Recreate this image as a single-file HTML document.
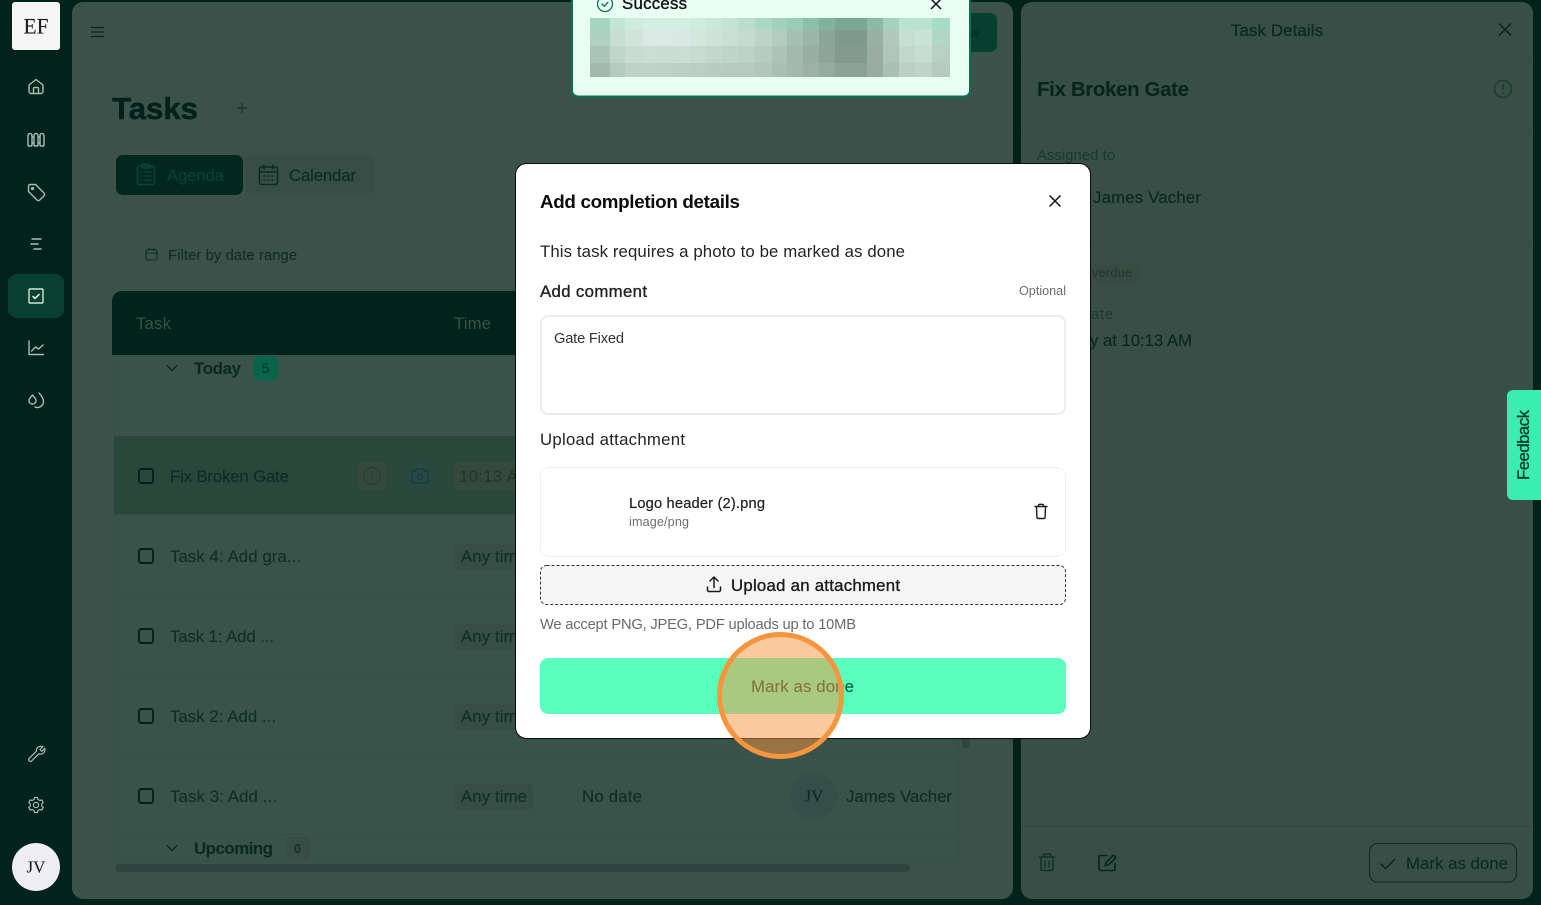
<!DOCTYPE html>
<html lang="en"><head><meta charset="utf-8"><title>Tasks</title>
<style>
html,body{margin:0;padding:0;width:1541px;height:905px;overflow:hidden;background:#02231a}
svg{display:block}
text{font-family:"Liberation Sans",Arial,sans-serif;font-size:16.8px;stroke:rgba(10,40,32,.45);stroke-width:.2}
.d{fill:#0a2a22}
.m{stroke-width:.35;stroke:currentColor}
.i{fill:none;stroke-linecap:round;stroke-linejoin:round}
</style></head><body>
<svg xmlns="http://www.w3.org/2000/svg" width="1541" height="905" viewBox="0 0 1541 905">
<rect width="1541" height="905" fill="#02231a"/>
<!-- main panel -->
<rect x="72" y="2" width="941" height="897" rx="11" fill="#3a5249"/>
<rect x="1021" y="2" width="512" height="897" rx="11" fill="#384f48"/>
<!-- sidebar -->
<rect x="12" y="2" width="48" height="48" rx="3" fill="#f5f5f6"/>
<text x="36" y="33.500" text-anchor="middle" style="font-family:'Liberation Serif',serif;font-size:22px" fill="#1c1c1c" textLength="25" lengthAdjust="spacingAndGlyphs">EF</text>
<rect x="8" y="274" width="56" height="44" rx="9" fill="#07402f"/>
<g class="i" stroke="#a9bdb7" stroke-width="1.4">
<path d="M29 91.500v-6.500l7-5.500 7 5.500v6.500a2 2 0 0 1-2 2H31a2 2 0 0 1-2-2z"/><path d="M33.500 93.500v-5a1 1 0 0 1 1-1h3a1 1 0 0 1 1 1v5"/>
<path d="M28 135.500v9.500a1 1 0 0 0 1 1h2a1 1 0 0 0 1-1v-9.500a2 2 0 0 0-4 0zM34 135.500v9.500a1 1 0 0 0 1 1h2a1 1 0 0 0 1-1v-9.500a2 2 0 0 0-4 0zM40 135.500v9.500a1 1 0 0 0 1 1h2a1 1 0 0 0 1-1v-9.500a2 2 0 0 0-4 0zM32 137h2M38 137h2M32 143h2M38 143h2"/>
<path d="M28.500 186a1.500 1.500 0 0 1 1.500-1.500h5.500l8.500 8.500a2 2 0 0 1 0 2.800l-4.200 4.200a2 2 0 0 1-2.800 0l-8.500-8.500z"/><circle cx="32.500" cy="188.500" r=".9"/>
<path d="M32 239h9M31 244h7M34 249h7"/>
<path d="M29 341v13.500h14.500M31.500 351l4-4 3 2 4.500-4"/>
<path d="M39 393c2 2.500 4.500 5 4.500 8.500a6 6 0 0 1-8.500 5.500"/><path d="M32.500 395l2.700 3.300a3.500 3.500 0 1 1-5.400 0z"/>
<path d="M43 746.500l-3 3 1.800 1.800 3-3a4.500 4.500 0 0 1-6 5.500l-7.300 7.300a1.800 1.800 0 0 1-2.500-2.500l7.300-7.300a4.500 4.500 0 0 1 5.700-4.800z" stroke-width="1.200"/>
<circle cx="36" cy="805" r="2.600" stroke-width="1.200"/><path d="M34.500 797.500h3l.5 2 1.800 1 2-.6 1.500 2.600-1.500 1.500v2l1.500 1.500-1.500 2.600-2-.6-1.800 1-.5 2h-3l-.5-2-1.800-1-2 .6-1.500-2.600 1.500-1.500v-2l-1.500-1.500 1.500-2.600 2 .6 1.800-1z" stroke-width="1.200"/>
</g>
<g class="i" stroke="#d4e6df" stroke-width="1.400"><rect x="29" y="289" width="14" height="14" rx="1"/><path d="M33 296.500l2 2 4-4" stroke-width="1.600"/></g>
<circle cx="36" cy="867" r="24" fill="#eeeef2"/>
<text x="36" y="872.500" text-anchor="middle" style="font-family:'Liberation Serif',serif;font-size:17px" fill="#1c1c1c">JV</text>
<!-- top -->
<path d="M91 27.500h13M91 32h13M91 36.500h13" stroke="#10261f" stroke-width="1.300" fill="none"/>
<rect x="960" y="13" width="37" height="39" rx="7" fill="#073f2e"/>
<text x="969" y="37" fill="#052a20" style="font-size:14px">w</text>
<text x="112" y="119" style="font-size:31px;font-weight:700;stroke:#04201a;stroke-width:.5" fill="#04201a" textLength="86" lengthAdjust="spacingAndGlyphs">Tasks</text>
<path d="M242 103v10M237 108h10" stroke="#142e27" stroke-width="1.200"/>
<!-- tabs -->
<rect x="245" y="153" width="129" height="42" rx="8" fill="#364e46"/>
<rect x="116" y="155" width="127" height="40" rx="7" fill="#02281e"/>
<g class="i" stroke="#0a4536" stroke-width="1.400"><rect x="137.500" y="166" width="17" height="18.500" rx="2"/><rect x="142" y="164" width="8" height="4" rx="1"/><path d="M141 172h1M145 172h6M141 176h1M145 176h6M141 180h1M145 180h6"/></g>
<text x="167" y="181" fill="#0a4536" style="stroke:none" textLength="57" lengthAdjust="spacing">Agenda</text>
<g class="i" stroke="#0a2a22" stroke-width="1.500"><rect x="259.500" y="167" width="18" height="17.500" rx="2"/><path d="M259.500 172h18M264 165v4M273 165v4M264 176h1M268 176h1M272 176h1M264 180h1M268 180h1M272 180h1"/></g>
<text x="289" y="181" class="d" textLength="67" lengthAdjust="spacing">Calendar</text>
<g class="i" stroke="#142e27" stroke-width="1.100"><rect x="146" y="249.500" width="11" height="10.500" rx="1.500"/><path d="M146 253h11M149 248v2.500M154 248v2.500"/></g>
<text x="168" y="260" style="font-size:14.7px" fill="#142e27" textLength="129" lengthAdjust="spacing">Filter by date range</text>
<!-- table -->
<rect x="114" y="355" width="845" height="505" fill="#3a534a" stroke="#374f47"/>
<path d="M112 355v-54a10 10 0 0 1 10-10h400v64z" fill="#02231a"/>
<text x="136" y="329" fill="#375249" style="stroke:none" textLength="35" lengthAdjust="spacing">Task</text>
<text x="454" y="329" fill="#375249" style="stroke:none" textLength="37" lengthAdjust="spacing">Time</text>
<path d="M167 365.500l5 5 5-5" class="i" stroke="#0a2a22" stroke-width="1.500"/>
<text x="194" y="374" style="font-weight:700" class="d" textLength="47" lengthAdjust="spacing">Today</text>
<rect x="253" y="356" width="25" height="24" rx="5" fill="#0a644a"/>
<text x="265.500" y="373" text-anchor="middle" style="font-size:14px" fill="#073a2b">5</text>
<rect x="114" y="436" width="420" height="78" fill="#2a473c"/>
<path d="M114 514.500h845M114 594.500h845M114 674.500h845M114 754.500h845M114 834.500h845" stroke="#354e46"/>
<g fill="none" stroke="#04201a" stroke-width="1.900"><rect x="139" y="469" width="14" height="14" rx="2.500"/><rect x="139" y="549" width="14" height="14" rx="2.500"/><rect x="139" y="629" width="14" height="14" rx="2.500"/><rect x="139" y="709" width="14" height="14" rx="2.500"/><rect x="139" y="789" width="14" height="14" rx="2.500"/></g>
<text x="170" y="482" fill="#0c2c24" textLength="119" lengthAdjust="spacing">Fix Broken Gate</text>
<text x="170" y="562" fill="#0f2f27" textLength="131" lengthAdjust="spacing">Task 4: Add gra...</text>
<text x="170" y="642" fill="#0f2f27" textLength="104" lengthAdjust="spacing">Task 1: Add ...</text>
<text x="170" y="722" fill="#0f2f27" textLength="106" lengthAdjust="spacing">Task 2: Add ...</text>
<text x="170" y="802" fill="#0f2f27" textLength="107" lengthAdjust="spacing">Task 3: Add ...</text>
<rect x="358" y="462" width="28" height="28" rx="4" fill="#35493c"/>
<circle cx="372" cy="476" r="8.500" fill="none" stroke="#263f30" stroke-width="1.500"/><path d="M372 471.500v5M372 479.500v.5" stroke="#263f30" stroke-width="1.500" stroke-linecap="round"/>
<rect x="406" y="462" width="28" height="28" rx="4" fill="#294840"/>
<g class="i" stroke="#133c48" stroke-width="1.500"><path d="M412 472.500a1.500 1.500 0 0 1 1.500-1.500h2l1.500-2h6l1.500 2h2a1.500 1.500 0 0 1 1.500 1.500v9a1.500 1.500 0 0 1-1.500 1.500h-13a1.500 1.500 0 0 1-1.500-1.500z"/><circle cx="420" cy="477" r="2.500"/></g>
<rect x="454" y="462" width="80" height="28" rx="4" fill="#35493c"/>
<text x="459" y="482" fill="#1f3629" style="stroke:none" textLength="73" lengthAdjust="spacing">10:13 AM</text>
<rect x="454" y="544" width="79" height="26" rx="4" fill="#364e46"/><rect x="454" y="624" width="79" height="26" rx="4" fill="#364e46"/><rect x="454" y="704" width="79" height="26" rx="4" fill="#364e46"/><rect x="454" y="784" width="79" height="26" rx="4" fill="#364e46"/>
<text x="461" y="562" fill="#0f2f27" textLength="66" lengthAdjust="spacing">Any time</text>
<text x="461" y="642" fill="#0f2f27" textLength="66" lengthAdjust="spacing">Any time</text>
<text x="461" y="722" fill="#0f2f27" textLength="66" lengthAdjust="spacing">Any time</text>
<text x="461" y="802" fill="#0f2f27" textLength="66" lengthAdjust="spacing">Any time</text>
<text x="582" y="802" fill="#0c2c24" textLength="60" lengthAdjust="spacing">No date</text>
<circle cx="814" cy="796" r="23.500" fill="#354e47"/>
<text x="814" y="801.500" text-anchor="middle" style="font-family:'Liberation Serif',serif;font-size:17px" fill="#0a2a22">JV</text>
<text x="846" y="802" fill="#0c2c24" textLength="106" lengthAdjust="spacing">James Vacher</text>
<path d="M167 845.500l5 5 5-5" class="i" stroke="#0a2a22" stroke-width="1.500"/>
<text x="194" y="854" style="font-weight:700" class="d" textLength="79" lengthAdjust="spacing">Upcoming</text>
<rect x="286" y="837" width="24" height="22" rx="4" fill="#364e46"/>
<text x="297.500" y="853" text-anchor="middle" style="font-size:13px;font-weight:700" fill="#16342b">0</text>
<rect x="115" y="864" width="795" height="8" rx="4" fill="#2e463f"/>
<rect x="962" y="700" width="8" height="48" rx="4" fill="#2e463f"/>
<!-- right panel -->
<path d="M1021 58.500h512M1021 128.500h512M1021 244.500h512" stroke="#364d46"/>
<path d="M1021 826.500h512" stroke="#2f4740"/>
<text x="1231" y="36" class="m" style="color:#0a2a22" fill="#0a2a22" textLength="92" lengthAdjust="spacing">Task Details</text>
<path d="M1499 23.500l12 12M1511 23.500l-12 12" stroke="#08261e" stroke-width="1.500" fill="none"/>
<text x="1037" y="96" style="font-size:20.5px;font-weight:700" fill="#06251d" textLength="152" lengthAdjust="spacing">Fix Broken Gate</text>
<circle cx="1503" cy="89" r="8.500" fill="none" stroke="#1f3c28" stroke-width="1.500"/><path d="M1503 84.500v5M1503 92.500v.5" stroke="#1f3c28" stroke-width="1.500" stroke-linecap="round"/>
<text x="1037" y="160" style="font-size:14.7px;stroke:none" fill="#1b382f" textLength="78" lengthAdjust="spacing">Assigned to</text>
<text x="1093" y="203" fill="#08261e" textLength="108" lengthAdjust="spacing">James Vacher</text>
<rect x="1080" y="264" width="60" height="20" rx="4" fill="#394b43"/>
<text x="1092" y="277" style="font-size:12.6px;stroke:none" fill="#1b382f" textLength="40" lengthAdjust="spacing">verdue</text>
<text x="1091" y="319" style="font-size:14.7px;stroke:none" fill="#1b382f" textLength="22" lengthAdjust="spacing">ate</text>
<text x="1090" y="346" fill="#08261e" textLength="102" lengthAdjust="spacing">y at 10:13 AM</text>
<g class="i" stroke="#142e27" stroke-width="1.500"><path d="M1039.500 857h15M1043.500 857v-1.500a1.500 1.500 0 0 1 1.500-1.500h4a1.500 1.500 0 0 1 1.500 1.500v1.500M1041 857v12a1.500 1.500 0 0 0 1.500 1.500h9a1.500 1.500 0 0 0 1.500-1.500v-12M1045 861v6M1049 861v6"/></g>
<g class="i" stroke="#08261e" stroke-width="1.600"><path d="M1107 855.500h-6.500a1.500 1.500 0 0 0-1.500 1.500v12a1.500 1.500 0 0 0 1.500 1.500h13a1.500 1.500 0 0 0 1.500-1.500v-6"/><path d="M1113.500 855l2.500 2.500-7.500 7.500-3.200.7.700-3.200z"/></g>
<rect x="1369.500" y="843.500" width="147" height="38.500" rx="8" fill="none" stroke="#152e25" stroke-width="1.200"/>
<path d="M1381 864l4.500 4.500 9-9" class="i" stroke="#08261e" stroke-width="1.500"/>
<text x="1406" y="869" fill="#0a2a22" textLength="102" lengthAdjust="spacing">Mark as done</text>
<!-- feedback -->
<rect x="1507" y="390" width="50" height="110" rx="6" fill="#3aeeb1"/>
<text transform="translate(1529 480) rotate(-90)" class="m" style="color:#0a3a2d" fill="#0a3a2d" textLength="70" lengthAdjust="spacing">Feedback</text>
<!-- toast -->
<rect x="572" y="-20" width="398" height="116.500" rx="6" fill="#e8fdf3" stroke="#0d6e51" stroke-width="2"/>
<circle cx="605" cy="4" r="7.500" fill="none" stroke="#0d6e51" stroke-width="1.300"/><path d="M602 4l2.300 2.300 3.700-4" class="i" stroke="#0d6e51" stroke-width="1.300"/>
<text x="622" y="9" class="m" style="color:#111" fill="#111" textLength="65" lengthAdjust="spacing">Success</text>
<path d="M931 -1l10 10M941 -1l-10 10" stroke="#111" stroke-width="1.500"/>
<g shape-rendering="crispEdges">
<rect x="590" y="18" width="20" height="12" fill="#a4d5c2"/><rect x="610" y="18" width="15" height="12" fill="#c0e6d5"/><rect x="625" y="18" width="18" height="12" fill="#cdebdf"/><rect x="643" y="18" width="15" height="12" fill="#d2efe3"/><rect x="658" y="18" width="15" height="12" fill="#d3efe3"/><rect x="673" y="18" width="17" height="12" fill="#d3efe3"/><rect x="690" y="18" width="16" height="12" fill="#cfece0"/><rect x="706" y="18" width="16" height="12" fill="#c9e8da"/><rect x="722" y="18" width="16" height="12" fill="#c3e4d5"/><rect x="738" y="18" width="17" height="12" fill="#b8dfce"/><rect x="755" y="18" width="17" height="12" fill="#abd7c5"/><rect x="772" y="18" width="15" height="12" fill="#a3d0bf"/><rect x="787" y="18" width="16" height="12" fill="#9accb9"/><rect x="803" y="18" width="16" height="12" fill="#8abfab"/><rect x="819" y="18" width="16" height="12" fill="#7fb29f"/><rect x="835" y="18" width="16" height="12" fill="#79a897"/><rect x="851" y="18" width="16" height="12" fill="#79a897"/><rect x="867" y="18" width="16" height="12" fill="#8abba8"/><rect x="883" y="18" width="16" height="12" fill="#a3d2bf"/><rect x="899" y="18" width="16" height="12" fill="#b9e3d1"/><rect x="915" y="18" width="17" height="12" fill="#b8e3d0"/><rect x="932" y="18" width="18" height="12" fill="#a8dcc5"/>
<rect x="590" y="30" width="20" height="16" fill="#b0d0c2"/><rect x="610" y="30" width="15" height="16" fill="#c6ded3"/><rect x="625" y="30" width="18" height="16" fill="#d0e4da"/><rect x="643" y="30" width="15" height="16" fill="#dae9e3"/><rect x="658" y="30" width="15" height="16" fill="#dbeae4"/><rect x="673" y="30" width="17" height="16" fill="#d9e8e2"/><rect x="690" y="30" width="16" height="16" fill="#d5e6de"/><rect x="706" y="30" width="16" height="16" fill="#cfe2d9"/><rect x="722" y="30" width="16" height="16" fill="#c9dfd3"/><rect x="738" y="30" width="17" height="16" fill="#c4dcd0"/><rect x="755" y="30" width="17" height="16" fill="#bcd4c8"/><rect x="772" y="30" width="15" height="16" fill="#b2ccbf"/><rect x="787" y="30" width="16" height="16" fill="#a4bfb3"/><rect x="803" y="30" width="16" height="16" fill="#9bb5a9"/><rect x="819" y="30" width="16" height="16" fill="#8ba598"/><rect x="835" y="30" width="16" height="16" fill="#7f9a8d"/><rect x="851" y="30" width="16" height="16" fill="#7f9a8d"/><rect x="867" y="30" width="16" height="16" fill="#96b0a4"/><rect x="883" y="30" width="16" height="16" fill="#b1c9bd"/><rect x="899" y="30" width="16" height="16" fill="#c5dfd2"/><rect x="915" y="30" width="17" height="16" fill="#c8e3d7"/><rect x="932" y="30" width="18" height="16" fill="#b0d6c4"/>
<rect x="590" y="46" width="20" height="17" fill="#a9c5b9"/><rect x="610" y="46" width="15" height="17" fill="#c0d5cc"/><rect x="625" y="46" width="18" height="17" fill="#c9dcd3"/><rect x="643" y="46" width="15" height="17" fill="#cbded5"/><rect x="658" y="46" width="15" height="17" fill="#cadcd4"/><rect x="673" y="46" width="17" height="17" fill="#cbded6"/><rect x="690" y="46" width="16" height="17" fill="#c8dbd2"/><rect x="706" y="46" width="16" height="17" fill="#c3d7cd"/><rect x="722" y="46" width="16" height="17" fill="#bfd4ca"/><rect x="738" y="46" width="17" height="17" fill="#bcd1c7"/><rect x="755" y="46" width="17" height="17" fill="#b7ccc1"/><rect x="772" y="46" width="15" height="17" fill="#adc2b8"/><rect x="787" y="46" width="16" height="17" fill="#a3b9ae"/><rect x="803" y="46" width="16" height="17" fill="#98aea4"/><rect x="819" y="46" width="16" height="17" fill="#8ea499"/><rect x="835" y="46" width="16" height="17" fill="#829a8f"/><rect x="851" y="46" width="16" height="17" fill="#829a8f"/><rect x="867" y="46" width="16" height="17" fill="#98aca3"/><rect x="883" y="46" width="16" height="17" fill="#aec5b9"/><rect x="899" y="46" width="16" height="17" fill="#c1d7cb"/><rect x="915" y="46" width="17" height="17" fill="#c6dbd1"/><rect x="932" y="46" width="18" height="17" fill="#b6d0c3"/>
<rect x="590" y="63" width="20" height="14" fill="#a2b9af"/><rect x="610" y="63" width="15" height="14" fill="#b4c9c0"/><rect x="625" y="63" width="18" height="14" fill="#bfd2c9"/><rect x="643" y="63" width="15" height="14" fill="#c0d2ca"/><rect x="658" y="63" width="15" height="14" fill="#bfd2c9"/><rect x="673" y="63" width="17" height="14" fill="#bdd0c7"/><rect x="690" y="63" width="16" height="14" fill="#bbcec5"/><rect x="706" y="63" width="16" height="14" fill="#b9ccc3"/><rect x="722" y="63" width="16" height="14" fill="#b7cac0"/><rect x="738" y="63" width="17" height="14" fill="#b7cabf"/><rect x="755" y="63" width="17" height="14" fill="#b2c6bb"/><rect x="772" y="63" width="15" height="14" fill="#a9bfb4"/><rect x="787" y="63" width="16" height="14" fill="#a4b9ae"/><rect x="803" y="63" width="16" height="14" fill="#9db1a7"/><rect x="819" y="63" width="16" height="14" fill="#95aaa0"/><rect x="835" y="63" width="16" height="14" fill="#8ca297"/><rect x="851" y="63" width="16" height="14" fill="#8ca297"/><rect x="867" y="63" width="16" height="14" fill="#98aca3"/><rect x="883" y="63" width="16" height="14" fill="#aabfb5"/><rect x="899" y="63" width="16" height="14" fill="#bcd0c6"/><rect x="915" y="63" width="17" height="14" fill="#c0d4ca"/><rect x="932" y="63" width="18" height="14" fill="#b5cbc0"/>
</g>
<!-- modal -->
<rect x="515.500" y="163.500" width="575" height="575" rx="11" fill="#fff" stroke="#0a0a0a" stroke-width="1"/>
<text x="540" y="208" style="font-size:18.8px;font-weight:700;stroke:none" fill="#0c0c0c" textLength="200" lengthAdjust="spacing">Add completion details</text>
<path d="M1049.500 195.500l11 11M1060.500 195.500l-11 11" stroke="#111" stroke-width="1.500" fill="none"/>
<text x="540" y="257" style="stroke:none" fill="#242424" textLength="365" lengthAdjust="spacing">This task requires a photo to be marked as done</text>
<text x="540" y="297" class="m" style="color:#222" fill="#222" textLength="107" lengthAdjust="spacing">Add comment</text>
<text x="1019" y="295" style="font-size:12.6px;stroke:none" fill="#6d6d6d" textLength="47" lengthAdjust="spacing">Optional</text>
<rect x="541" y="316" width="524" height="98" rx="7" fill="#fff" stroke="#ececec" stroke-width="2"/>
<text x="554" y="343" style="font-size:14.7px;stroke:none" fill="#333" textLength="70" lengthAdjust="spacing">Gate Fixed</text>
<text x="540" y="445" style="stroke:none" fill="#242424" textLength="145" lengthAdjust="spacing">Upload attachment</text>
<rect x="540.500" y="467.500" width="525" height="89" rx="8" fill="#fff" stroke="#f0f0f0"/>
<text x="629" y="508" class="m" style="font-size:14.7px;color:#222;stroke-width:.2" fill="#222" textLength="136" lengthAdjust="spacing">Logo header (2).png</text>
<text x="629" y="526" style="font-size:12.6px;stroke:none" fill="#6d6d6d" textLength="60" lengthAdjust="spacing">image/png</text>
<g class="i" stroke="#1c1c1c" stroke-width="1.400"><path d="M1035 506.500h12M1038.500 506.500v-1a1.200 1.200 0 0 1 1.200-1.200h2.600a1.200 1.200 0 0 1 1.200 1.200v1M1036.500 506.500l.4 11a1.500 1.500 0 0 0 1.500 1h5.200a1.500 1.500 0 0 0 1.500-1l.4-11"/></g>
<rect x="540.500" y="565.500" width="525" height="39" rx="6" fill="#f5f5f5" stroke="#333" stroke-dasharray="3 2"/>
<g class="i" stroke="#1a1a1a" stroke-width="1.500"><path d="M714 587.500v-10M710 581l4-4 4 4M707.500 587v3a1.500 1.500 0 0 0 1.500 1.500h10a1.500 1.500 0 0 0 1.500-1.500v-3"/></g>
<text x="731" y="591" class="m" style="color:#1a1a1a" fill="#1a1a1a" textLength="169" lengthAdjust="spacing">Upload an attachment</text>
<text x="540" y="629" style="font-size:14.7px;stroke:none" fill="#6a6a6a" textLength="316" lengthAdjust="spacing">We accept PNG, JPEG, PDF uploads up to 10MB</text>
<rect x="540" y="658" width="526" height="56" rx="8" fill="#5affbe"/>
<text x="751" y="692" fill="#0a5a42" textLength="103" lengthAdjust="spacing">Mark as done</text>
<!-- spotlight -->
<circle cx="780.500" cy="695.500" r="61" fill="#f7943e" fill-opacity=".5" stroke="#f7943e" stroke-width="5"/>
</svg>
</body></html>
